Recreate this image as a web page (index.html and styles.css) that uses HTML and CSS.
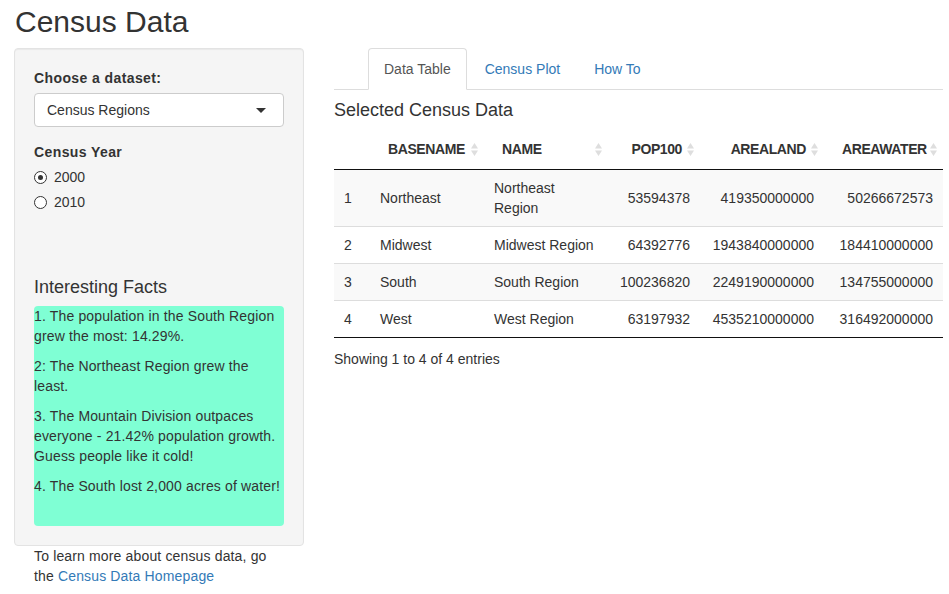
FILE: index.html
```html
<!DOCTYPE html>
<html lang="en">
<head>
<meta charset="utf-8">
<title>Census Data</title>
<link rel="stylesheet" href="styles.css">
</head>
<body>
<h2 class="title">Census Data</h2>
<div class="layout">
  <aside class="sidebar">
    <div class="well">
      <div class="form-group">
        <label class="control-label">Choose a dataset:</label>
        <div class="select">
          <span>Census Regions</span>
          <svg class="caret" width="10" height="5" viewBox="0 0 10 5"><path d="M0 0H10L5 5Z" fill="#333"/></svg>
        </div>
      </div>
      <div class="form-group">
        <label class="control-label">Census Year</label>
        <div class="radio"><span class="radio-dot checked"></span><span>2000</span></div>
        <div class="radio"><span class="radio-dot"></span><span>2010</span></div>
      </div>
      <h4 class="facts-title">Interesting Facts</h4>
      <div class="facts">
        <p>1. The population in the South Region grew the most: 14.29%.</p>
        <p>2: The Northeast Region grew the least.</p>
        <p>3. The Mountain Division outpaces everyone - 21.42% population growth. Guess people like it cold!</p>
        <p>4. The South lost 2,000 acres of water!</p>
      </div>
    </div>
    <p class="learn">To learn more about census data, go the <a href="#">Census Data Homepage</a></p>
  </aside>
  <main class="main">
    <ul class="nav-tabs">
      <li class="active"><a href="#">Data Table</a></li>
      <li><a href="#">Census Plot</a></li>
      <li><a href="#">How To</a></li>
    </ul>
    <h4 class="section-title">Selected Census Data</h4>
    <table class="data">
      <colgroup>
        <col class="c-idx"><col class="c-base"><col class="c-name"><col class="c-pop"><col class="c-land"><col class="c-water">
      </colgroup>
      <thead>
        <tr>
          <th class="plain"></th>
          <th class="sort">BASENAME</th>
          <th class="sort">NAME</th>
          <th class="sort right">POP100</th>
          <th class="sort right">AREALAND</th>
          <th class="sort right">AREAWATER</th>
        </tr>
      </thead>
      <tbody>
        <tr class="odd"><td>1</td><td>Northeast</td><td>Northeast Region</td><td class="right">53594378</td><td class="right">419350000000</td><td class="right">50266672573</td></tr>
        <tr><td>2</td><td>Midwest</td><td>Midwest Region</td><td class="right">64392776</td><td class="right">1943840000000</td><td class="right">184410000000</td></tr>
        <tr class="odd"><td>3</td><td>South</td><td>South Region</td><td class="right">100236820</td><td class="right">2249190000000</td><td class="right">134755000000</td></tr>
        <tr><td>4</td><td>West</td><td>West Region</td><td class="right">63197932</td><td class="right">4535210000000</td><td class="right">316492000000</td></tr>
      </tbody>
    </table>
    <div class="info">Showing 1 to 4 of 4 entries</div>
  </main>
</div>
</body>
</html>
```
FILE: styles.css
```css
html, body {
  margin: 0;
  padding: 0;
  background: #fff;
  color: #333;
  font-family: "Liberation Sans", Arial, sans-serif;
  font-size: 14px;
  line-height: 20px;
}

.title {
  margin: 5px 0 10px 15px;
  font-size: 30px;
  line-height: 33px;
  font-weight: 500;
  color: #333;
}

.layout {
  display: flex;
  gap: 30px;
  padding-left: 14px;
}

.sidebar {
  width: 290px;
  flex: none;
}

.well {
  background: #f5f5f5;
  border: 1px solid #e3e3e3;
  border-radius: 4px;
  padding: 19px;
  box-shadow: inset 0 1px 1px rgba(0,0,0,.05);
}

.form-group {
  margin-bottom: 15px;
}

.control-label {
  display: block;
  font-weight: bold;
  margin-bottom: 5px;
  letter-spacing: 0.4px;
}

.select {
  height: 34px;
  box-sizing: border-box;
  border: 1px solid #ccc;
  border-radius: 4px;
  background: #fff;
  display: flex;
  align-items: center;
  justify-content: space-between;
  padding: 0 17px 0 12px;
}

.caret {
  display: block;
}

.radio {
  display: flex;
  align-items: center;
  gap: 7px;
  height: 20px;
  margin-bottom: 5px;
}

.radio-dot {
  width: 11px;
  height: 11px;
  border: 1px solid #333;
  border-radius: 50%;
  background: #fff;
  position: relative;
  box-sizing: content-box;
}

.radio-dot.checked::after {
  content: "";
  position: absolute;
  left: 3px;
  top: 3px;
  width: 5px;
  height: 5px;
  border-radius: 50%;
  background: #333;
}

.facts-title {
  margin: 65px 0 9px;
  font-size: 18px;
  line-height: 20px;
  font-weight: 500;
}

.facts {
  background: #7fffd4;
  border-radius: 4px;
  padding: 0 0 20px;
  letter-spacing: 0.15px;
}

.facts p {
  margin: 0 0 10px;
}

.learn {
  margin: 0;
  padding: 0 20px;
  letter-spacing: 0.15px;
}

a {
  color: #337ab7;
  text-decoration: none;
}

.main {
  width: 609px;
  flex: none;
}

.nav-tabs {
  list-style: none;
  margin: 0;
  padding: 0 0 0 34px;
  display: flex;
  border-bottom: 1px solid #ddd;
}

.nav-tabs li {
  margin-bottom: -1px;
  margin-right: 2px;
}

.nav-tabs a {
  display: block;
  padding: 10px 15px;
  border: 1px solid transparent;
  border-radius: 4px 4px 0 0;
  line-height: 20px;
}

.nav-tabs li.active a {
  color: #555;
  background: #fff;
  border-color: #ddd;
  border-bottom-color: #fff;
}

.section-title {
  margin: 10px 0 9px;
  font-size: 18px;
  line-height: 20px;
  font-weight: 500;
}

.data {
  width: 609px;
  table-layout: fixed;
  border-collapse: collapse;
  border-bottom: 1px solid #111;
}

.c-idx { width: 36px; }
.c-base { width: 114px; }
.c-name { width: 124px; }
.c-pop { width: 92px; }
.c-land { width: 124px; }
.c-water { width: 119px; }

.data th {
  font-weight: bold;
  text-align: left;
  padding: 10px 18px;
  border-bottom: 1px solid #111;
  white-space: nowrap;
  letter-spacing: -0.4px;
}

.data th.sort {
  background-image: url("data:image/svg+xml,%3Csvg xmlns='http://www.w3.org/2000/svg' width='19' height='19' viewBox='0 0 19 19'%3E%3Cpath d='M6 8.5L9.5 3L13 8.5Z M6 10.5L9.5 16L13 10.5Z' fill='%23dedede'/%3E%3C/svg%3E");
  background-repeat: no-repeat;
  background-position: center right;
}

.data th.right,
.data td.right {
  text-align: right;
}

.data td {
  padding: 8px 10px;
  vertical-align: middle;
  border-top: 1px solid #ddd;
}

.data tbody tr:first-child td {
  border-top: none;
}

.data tr.odd td {
  background: #f9f9f9;
}

.info {
  padding-top: 11px;
}
```
